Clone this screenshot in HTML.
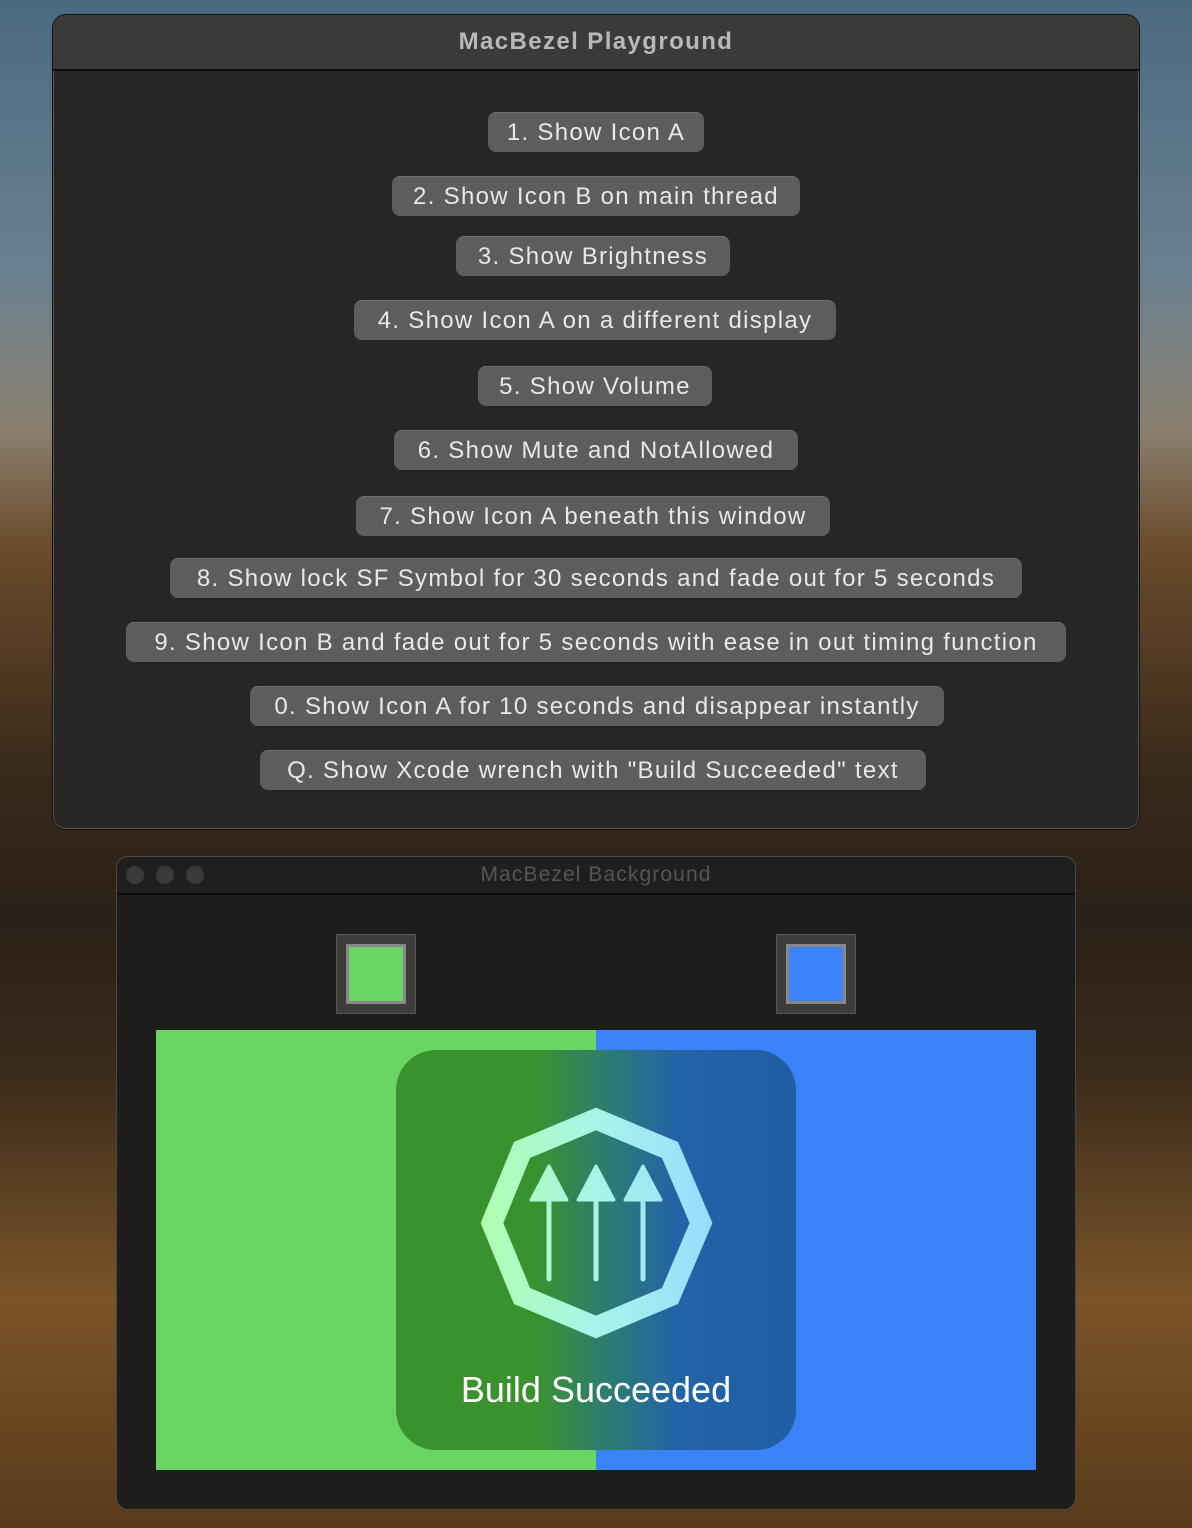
<!DOCTYPE html>
<html><head><meta charset="utf-8"><style>
*{margin:0;padding:0;box-sizing:border-box}
body{width:1192px;height:1528px;position:relative;overflow:hidden;font-family:"Liberation Sans",sans-serif;
background:linear-gradient(180deg,#4a6a80 0%,#6a8090 18%,#8a8070 28%,#6a4a2a 36%,#3a2a1a 50%,#2a2018 60%,#3a2a1a 70%,#7a5428 85%,#5a3a1a 100%);}
.w1{position:absolute;left:52px;top:14px;width:1088px;height:816px;background:#272625;border:1px solid #111;border-radius:14px;overflow:hidden;box-shadow:0 0 0 1px #555 inset}
.t1{height:56px;background:#3b3a39;border-bottom:2px solid #0e0e0e;text-align:center;line-height:54px;font-size:24px;font-weight:bold;color:#b8b8b8;letter-spacing:1.4px}
.b{position:absolute;height:40px;background:#5e5d5c;border-radius:8px;color:#e8e8e8;font-size:24px;line-height:40px;text-align:center;border-top:1px solid #707070;letter-spacing:1.3px;white-space:nowrap}
.w2{position:absolute;left:116px;top:856px;width:960px;height:654px;background:#1f1d1c;border:1px solid #4a4846;border-radius:12px;overflow:hidden}
.t2{height:38px;border-bottom:2px solid #0c0c0c;text-align:center;line-height:36px;font-size:21px;color:#555;background:#211f1e;letter-spacing:1.1px}
.d{position:absolute;top:9px;width:18px;height:18px;border-radius:50%;background:#3c3a39}
.sw{position:absolute;top:77px;width:80px;height:80px;background:#3d3c3b;border:1px solid #555}
.sw div{position:absolute;left:9px;top:9px;width:60px;height:60px;border:3px solid #888}
</style></head><body>
<div class="w1"><div class="t1">MacBezel Playground</div>
<div class="b" style="left:435px;top:97px;width:216px">1. Show Icon A</div>
<div class="b" style="left:339px;top:161px;width:408px">2. Show Icon B on main thread</div>
<div class="b" style="left:403px;top:221px;width:274px">3. Show Brightness</div>
<div class="b" style="left:301px;top:285px;width:482px">4. Show Icon A on a different display</div>
<div class="b" style="left:425px;top:351px;width:234px">5. Show Volume</div>
<div class="b" style="left:341px;top:415px;width:404px">6. Show Mute and NotAllowed</div>
<div class="b" style="left:303px;top:481px;width:474px">7. Show Icon A beneath this window</div>
<div class="b" style="left:117px;top:543px;width:852px">8. Show lock SF Symbol for 30 seconds and fade out for 5 seconds</div>
<div class="b" style="left:73px;top:607px;width:940px">9. Show Icon B and fade out for 5 seconds with ease in out timing function</div>
<div class="b" style="left:197px;top:671px;width:694px">0. Show Icon A for 10 seconds and disappear instantly</div>
<div class="b" style="left:207px;top:735px;width:666px">Q. Show Xcode wrench with "Build Succeeded" text</div>
</div>
<div class="w2"><div class="t2">MacBezel Background</div>
<div class="d" style="left:9px"></div><div class="d" style="left:39px"></div><div class="d" style="left:69px"></div>
<div class="sw" style="left:219px"><div style="background:#6bd563"></div></div>
<div class="sw" style="left:659px"><div style="background:#3b82f6"></div></div>
<div style="position:absolute;left:39px;top:173px;width:440px;height:440px;background:#6bd563"></div>
<div style="position:absolute;left:479px;top:173px;width:440px;height:440px;background:#3b82f6"></div>
<div style="position:absolute;left:279px;top:193px;width:400px;height:400px;border-radius:40px;background:linear-gradient(90deg,#3a922e 0%,#3a922e 35%,#2a7a78 55%,#2264a8 70%,#1f5ea3 100%)"></div>
<svg style="position:absolute;left:279px;top:193px" width="400" height="400" viewBox="396 1050 400 400">
<defs><linearGradient id="g" x1="482" x2="711" y1="0" y2="0" gradientUnits="userSpaceOnUse"><stop offset="0" stop-color="#b0ffb0"/><stop offset="0.5" stop-color="#a8f4e8"/><stop offset="1" stop-color="#98dcff"/></linearGradient></defs>
<polygon points="596,1119 670,1150 701,1223 670,1296 596,1327 522,1296 492,1223 522,1150" fill="none" stroke="url(#g)" stroke-width="21" stroke-linejoin="miter"/>
<g fill="url(#g)" stroke="url(#g)" stroke-linejoin="round" stroke-linecap="round">
<polygon points="549,1166 531,1200 567,1200" stroke-width="3"/><line x1="549" y1="1200" x2="549" y2="1279" stroke-width="5"/>
<polygon points="596,1166 578,1200 614,1200" stroke-width="3"/><line x1="596" y1="1200" x2="596" y2="1279" stroke-width="5"/>
<polygon points="643,1166 625,1200 661,1200" stroke-width="3"/><line x1="643" y1="1200" x2="643" y2="1279" stroke-width="5"/>
</g>
<text x="596" y="1402" text-anchor="middle" font-family="Liberation Sans" font-size="36" fill="#fff">Build Succeeded</text>
</svg>
</div>
</body></html>
